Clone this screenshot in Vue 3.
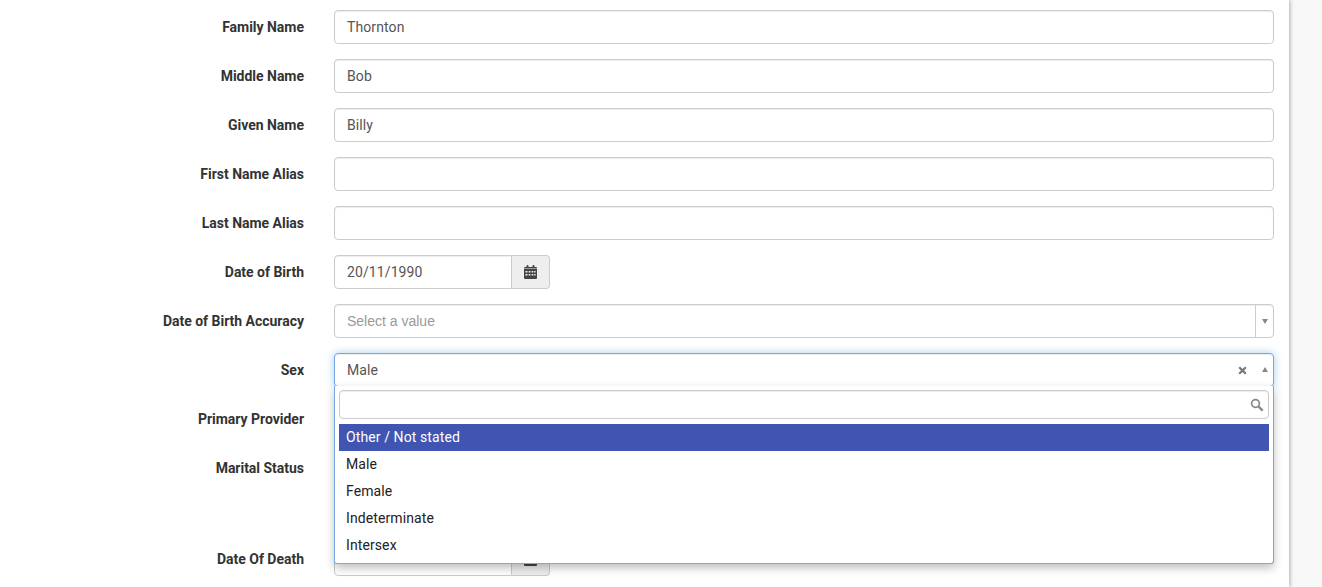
<script setup>
const top = [
  { label: 'Family Name', value: 'Thornton' },
  { label: 'Middle Name', value: 'Bob' },
  { label: 'Given Name', value: 'Billy' },
  { label: 'First Name Alias', value: '' },
  { label: 'Last Name Alias', value: '' },
]
const options = ['Other / Not stated', 'Male', 'Female', 'Indeterminate', 'Intersex']
</script>

<template>
  <div class="page">
    <main class="panel">
      <div v-for="r in top" :key="r.label" class="row">
        <label class="lbl">{{ r.label }}</label>
        <div class="field"><div class="input">{{ r.value }}</div></div>
      </div>

      <div class="row">
        <label class="lbl">Date of Birth</label>
        <div class="field">
          <div class="date">
            <div class="input date-input">20/11/1990</div>
            <span class="addon">
              <svg width="13" height="14" viewBox="0 0 13 14"><path fill="#444" d="M0 4h13v9a1 1 0 0 1-1 1H1a1 1 0 0 1-1-1zM1 2h1.5V1a1 1 0 0 1 2 0v1h4V1a1 1 0 0 1 2 0v1H12a1 1 0 0 1 1 1v.6H0V3a1 1 0 0 1 1-1z"/><path fill="#eee" d="M1.5 6h2v1.6h-2zM4.7 6h1.7v1.6H4.7zM7.6 6h1.7v1.6H7.6zM10.2 6h1.4v1.6h-1.4zM1.5 9h2v1.6h-2zM4.7 9h1.7v1.6H4.7zM7.6 9h1.7v1.6H7.6zM10.2 9h1.4v1.6h-1.4z"/></svg>
            </span>
          </div>
        </div>
      </div>

      <div class="row">
        <label class="lbl">Date of Birth Accuracy</label>
        <div class="field">
          <div class="input select">
            <span class="placeholder">Select a value</span>
            <span class="sep"><i class="caret down"></i></span>
          </div>
        </div>
      </div>

      <div class="row">
        <label class="lbl">Sex</label>
        <div class="field dd-wrap">
          <div class="input select open">
            <span>Male</span>
            <svg class="clear" width="9" height="9" viewBox="0 0 9 9"><path d="M1.2 1.2l6.6 6.6M7.8 1.2L1.2 7.8" stroke="#777" stroke-width="2.2"/></svg>
            <i class="caret up"></i>
          </div>
          <div class="menu">
            <div class="search">
              <svg width="14" height="14" viewBox="0 0 14 14"><circle cx="5.5" cy="5.5" r="3.9" fill="none" stroke="#888" stroke-width="1.7"/><path d="M8.5 8.5l4.2 4.2" stroke="#888" stroke-width="2.4"/></svg>
            </div>
            <ul class="opts">
              <li v-for="(o, i) in options" :key="o" :class="{ active: i === 0 }">{{ o }}</li>
            </ul>
          </div>
        </div>
      </div>

      <div class="row">
        <label class="lbl">Primary Provider</label>
        <div class="field"><div class="input"></div></div>
      </div>

      <div class="row tall">
        <label class="lbl">Marital Status</label>
        <div class="field"><div class="input"></div></div>
      </div>

      <div class="row">
        <label class="lbl">Date Of Death</label>
        <div class="field">
          <div class="date">
            <div class="input date-input"></div>
            <span class="addon">
              <svg width="13" height="14" viewBox="0 0 13 14"><path fill="#444" d="M0 4h13v9a1 1 0 0 1-1 1H1a1 1 0 0 1-1-1zM1 2h1.5V1a1 1 0 0 1 2 0v1h4V1a1 1 0 0 1 2 0v1H12a1 1 0 0 1 1 1v.6H0V3a1 1 0 0 1 1-1z"/></svg>
            </span>
          </div>
        </div>
      </div>
    </main>
  </div>
</template>

<style>
html, body { margin: 0; height: 100%; overflow: hidden; background: #f8f8f8; }
</style>

<style scoped>
.page {
  height: 587px;
  overflow: hidden;
  font-family: Roboto, sans-serif;
  font-size: 14px;
  color: #555;
}
.panel {
  width: 1289px;
  height: 587px;
  box-sizing: border-box;
  padding: 10px 15px 0 0;
  background: #fff;
  box-shadow: 1px 0 4px rgba(0, 0, 0, 0.3);
}
.row {
  display: flex;
  height: 34px;
  margin-bottom: 15px;
}
.row.tall { margin-bottom: 57px; }
.lbl {
  width: 304px;
  flex: none;
  line-height: 34px;
  text-align: right;
  font-weight: 700;
  color: #333;
  letter-spacing: -0.02px;
}
.field {
  margin-left: 30px;
  width: 940px;
  flex: none;
  letter-spacing: 0.1px;
}
.dd-wrap { position: relative; }
.input {
  height: 34px;
  box-sizing: border-box;
  border: 1px solid #ccc;
  border-radius: 4px;
  padding: 0 12px;
  line-height: 32px;
  background: #fff;
  box-shadow: inset 0 1px 1px rgba(0, 0, 0, 0.075);
}
.date { display: flex; width: 216px; }
.date-input {
  flex: 1;
  border-radius: 4px 0 0 4px;
}
.addon {
  width: 38px;
  box-sizing: border-box;
  border: 1px solid #ccc;
  border-left: 0;
  border-radius: 0 4px 4px 0;
  background: #eee;
  display: flex;
  align-items: center;
  justify-content: center;
}
.select { position: relative; }
.placeholder {
  font-family: "Liberation Sans", Arial, sans-serif;
  color: #999;
  letter-spacing: 0;
}
.sep {
  position: absolute;
  top: 0;
  right: 0;
  bottom: 0;
  width: 17px;
  border-left: 1px solid #ccc;
}
.caret {
  position: absolute;
  top: 14px;
  width: 0;
  height: 0;
  border-left: 3.5px solid transparent;
  border-right: 3.5px solid transparent;
}
.caret.down { right: 5px; border-top: 5px solid #888; }
.caret.up { right: 5.5px; top: 13px; border-bottom: 5px solid #888; }
.open {
  border-color: #7aa7e8;
  box-shadow: inset 0 1px 1px rgba(0, 0, 0, 0.075), 0 0 8px rgba(102, 175, 233, 0.6);
}
.clear { position: absolute; right: 26.5px; top: 11.5px; }
.menu {
  position: absolute;
  left: 0;
  right: 0;
  top: 33px;
  height: 178px;
  box-sizing: border-box;
  padding: 4px;
  background: #fff;
  border: 1px solid #7aa7e8;
  border-top: 0;
  border-radius: 0 0 3px 3px;
  box-shadow: 0 4px 10px rgba(0, 0, 0, 0.25);
  z-index: 5;
}
.search {
  height: 29px;
  box-sizing: border-box;
  border: 1px solid #ccc;
  border-radius: 4px;
  display: flex;
  align-items: center;
  justify-content: flex-end;
  padding-right: 4px;
  box-shadow: inset 0 1px 1px rgba(0, 0, 0, 0.075);
}
.opts {
  list-style: none;
  margin: 5px 0 0;
  padding: 0;
}
.opts li {
  height: 27px;
  line-height: 27px;
  padding-left: 7px;
  color: #222;
}
.opts li.active {
  background: #4054b2;
  color: #fff;
}
</style>
